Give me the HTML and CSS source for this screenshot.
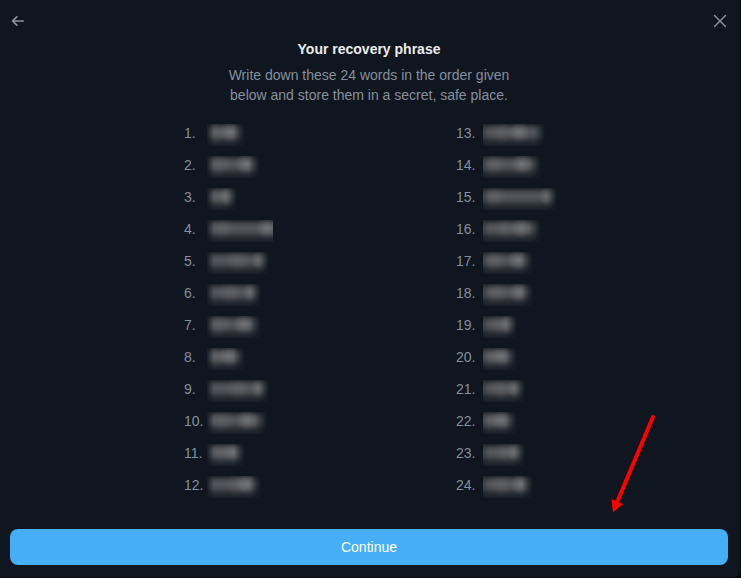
FILE: index.html
```html
<!DOCTYPE html>
<html lang="en">

<head>
  <meta charset="utf-8">
  <meta name="viewport" content="width=device-width, initial-scale=1">
  <title>Your recovery phrase</title>
  <link rel="stylesheet" href="styles.css">
</head>

<body>
  <main class="panel">
    <header class="top-bar">
      <button class="icon-button" type="button" aria-label="Back">
        <svg width="16" height="16" viewBox="0 0 16 16">
          <path d="M13.2 8H2.8M6.8 3.8L2.6 8l4.2 4.2"></path>
        </svg>
      </button>
      <button class="icon-button" type="button" aria-label="Close">
        <svg width="16" height="16" viewBox="0 0 16 16">
          <path class="thin" d="M2.5 2.5l11 11M13.5 2.5l-11 11"></path>
        </svg>
      </button>
    </header>

    <h1 class="title">Your recovery phrase</h1>
    <p class="text">Write down these 24 words in the order given below and store them in a secret, safe place.</p>

    <!-- --w: width of the hidden word, --a and --b: its brighter spots -->
    <div class="words">
      <ol class="column">
        <li><span class="number">1.</span><span class="word" style="--w: 38px; --a: 8px; --b: 23px"></span></li>
        <li><span class="number">2.</span><span class="word" style="--w: 53px; --a: 12px; --b: 39px"></span></li>
        <li><span class="number">3.</span><span class="word" style="--w: 30px; --a: 14px; --b: 23px"></span></li>
        <li><span class="number">4.</span><span class="word cut" style="--w: 66px; --a: 15px; --b: 60px"></span></li>
        <li><span class="number">5.</span><span class="word" style="--w: 62px; --a: 30px; --b: 55px"></span></li>
        <li><span class="number">6.</span><span class="word" style="--w: 54px; --a: 23px; --b: 46px"></span></li>
        <li><span class="number">7.</span><span class="word" style="--w: 54px; --a: 12px; --b: 37px"></span></li>
        <li><span class="number">8.</span><span class="word" style="--w: 38px; --a: 8px; --b: 22px"></span></li>
        <li><span class="number">9.</span><span class="word" style="--w: 62px; --a: 31px; --b: 54px"></span></li>
        <li><span class="number">10.</span><span class="word" style="--w: 60px; --a: 14px; --b: 40px"></span></li>
        <li><span class="number">11.</span><span class="word" style="--w: 38px; --a: 14px; --b: 26px"></span></li>
        <li><span class="number">12.</span><span class="word" style="--w: 54px; --a: 31px; --b: 40px"></span></li>
      </ol>
      <ol class="column second" start="13">
        <li><span class="number">13.</span><span class="word" style="--w: 62px; --a: 19px; --b: 36px"></span></li>
        <li><span class="number">14.</span><span class="word" style="--w: 58px; --a: 11px; --b: 39px"></span></li>
        <li><span class="number">15.</span><span class="word" style="--w: 74px; --a: 12px; --b: 67px"></span></li>
        <li><span class="number">16.</span><span class="word" style="--w: 58px; --a: 22px; --b: 38px"></span></li>
        <li><span class="number">17.</span><span class="word" style="--w: 50px; --a: 11px; --b: 35px"></span></li>
        <li><span class="number">18.</span><span class="word" style="--w: 50px; --a: 14px; --b: 36px"></span></li>
        <li><span class="number">19.</span><span class="word" style="--w: 34px; --a: 18px; --b: 27px"></span></li>
        <li><span class="number">20.</span><span class="word" style="--w: 34px; --a: 6px; --b: 18px"></span></li>
        <li><span class="number">21.</span><span class="word" style="--w: 42px; --a: 18px; --b: 34px"></span></li>
        <li><span class="number">22.</span><span class="word" style="--w: 34px; --a: 5px; --b: 18px"></span></li>
        <li><span class="number">23.</span><span class="word" style="--w: 42px; --a: 22px; --b: 34px"></span></li>
        <li><span class="number">24.</span><span class="word" style="--w: 50px; --a: 18px; --b: 38px"></span></li>
      </ol>
    </div>

    <button class="continue" type="button">Continue</button>

    <svg class="pointer" width="48" height="104" viewBox="0 0 48 104" aria-hidden="true">
      <path class="shaft" d="M43 7L8 90"></path>
      <path class="head" d="M1.500 89L13 94L3 102.500Z"></path>
    </svg>
  </main>
</body>

</html>
```

FILE: styles.css
```css
* {
  box-sizing: border-box;
}

body {
  margin: 0;
  padding: 0 1px 1px 0;
  background-color: #080a12;
  font-family: "Liberation Sans", Arial, sans-serif;
  font-size: 14px;
  line-height: 20px;
  color: #858f9d;
}

.panel {
  position: relative;
  padding: 10px 12px 12px 10px;
  background-color: #10161f;
  border-bottom-right-radius: 6px;
}

.top-bar {
  display: flex;
  justify-content: space-between;
  height: 29px;
}

.icon-button {
  width: 16px;
  height: 22px;
  padding: 0;
  border: none;
  background: none;
  cursor: pointer;
}

.icon-button svg {
  display: block;
  fill: none;
  stroke: #8994a3;
  stroke-width: 1.7;
  stroke-linecap: round;
  stroke-linejoin: round;
}

.icon-button .thin {
  stroke-width: 1.4;
}

.title {
  margin: 0 0 6px;
  text-align: center;
  font-size: 14px;
  line-height: 20px;
  color: #ececec;
}

.text {
  max-width: 300px;
  margin: 0 auto 12px;
  text-align: center;
}

.words {
  display: flex;
  justify-content: space-between;
  max-width: 370px;
  margin: 0 auto 28px;
}

.column {
  margin: 0;
  padding: 0;
  list-style: none;
}

.column li {
  display: flex;
  align-items: center;
  height: 32px;
}

.number {
  flex: none;
  width: 23px;
}

.second {
  width: 98px;
}

.second .number {
  width: 27px;
}

/* hidden word */
.word {
  flex: none;
  width: var(--w);
  height: 22px;
  margin-top: 4px;
  background:
    radial-gradient(circle at var(--a) 8px, rgba(150, 150, 150, 0.2), transparent 12px),
    radial-gradient(circle at var(--b) 8px, rgba(160, 160, 160, 0.4), transparent 11px),
    linear-gradient(#1d232b, #45484e 4px, #54575c 8px, #45484e 13px, #2b2f36 17px, #171d26);
  -webkit-mask-image: linear-gradient(90deg, rgba(0, 0, 0, 0.15), #000 7px, #000 calc(100% - 11px), transparent);
  mask-image: linear-gradient(90deg, rgba(0, 0, 0, 0.15), #000 7px, #000 calc(100% - 11px), transparent);
}

.second .word {
  -webkit-mask-image: linear-gradient(90deg, rgba(0, 0, 0, 0.7), #000 6px, #000 calc(100% - 11px), transparent);
  mask-image: linear-gradient(90deg, rgba(0, 0, 0, 0.7), #000 6px, #000 calc(100% - 11px), transparent);
}

.word.cut {
  -webkit-mask-image: linear-gradient(90deg, rgba(0, 0, 0, 0.15), #000 7px);
  mask-image: linear-gradient(90deg, rgba(0, 0, 0, 0.15), #000 7px);
}

.continue {
  display: block;
  width: 100%;
  height: 36px;
  border: none;
  border-radius: 8px;
  background-color: #45aef5;
  font: inherit;
  color: #fff;
  cursor: pointer;
}

.pointer {
  position: absolute;
  right: 82px;
  bottom: 63px;
}

.pointer .shaft {
  fill: none;
  stroke: #f00;
  stroke-width: 4;
  stroke-linecap: round;
}

.pointer .head {
  fill: #f00;
}
```
